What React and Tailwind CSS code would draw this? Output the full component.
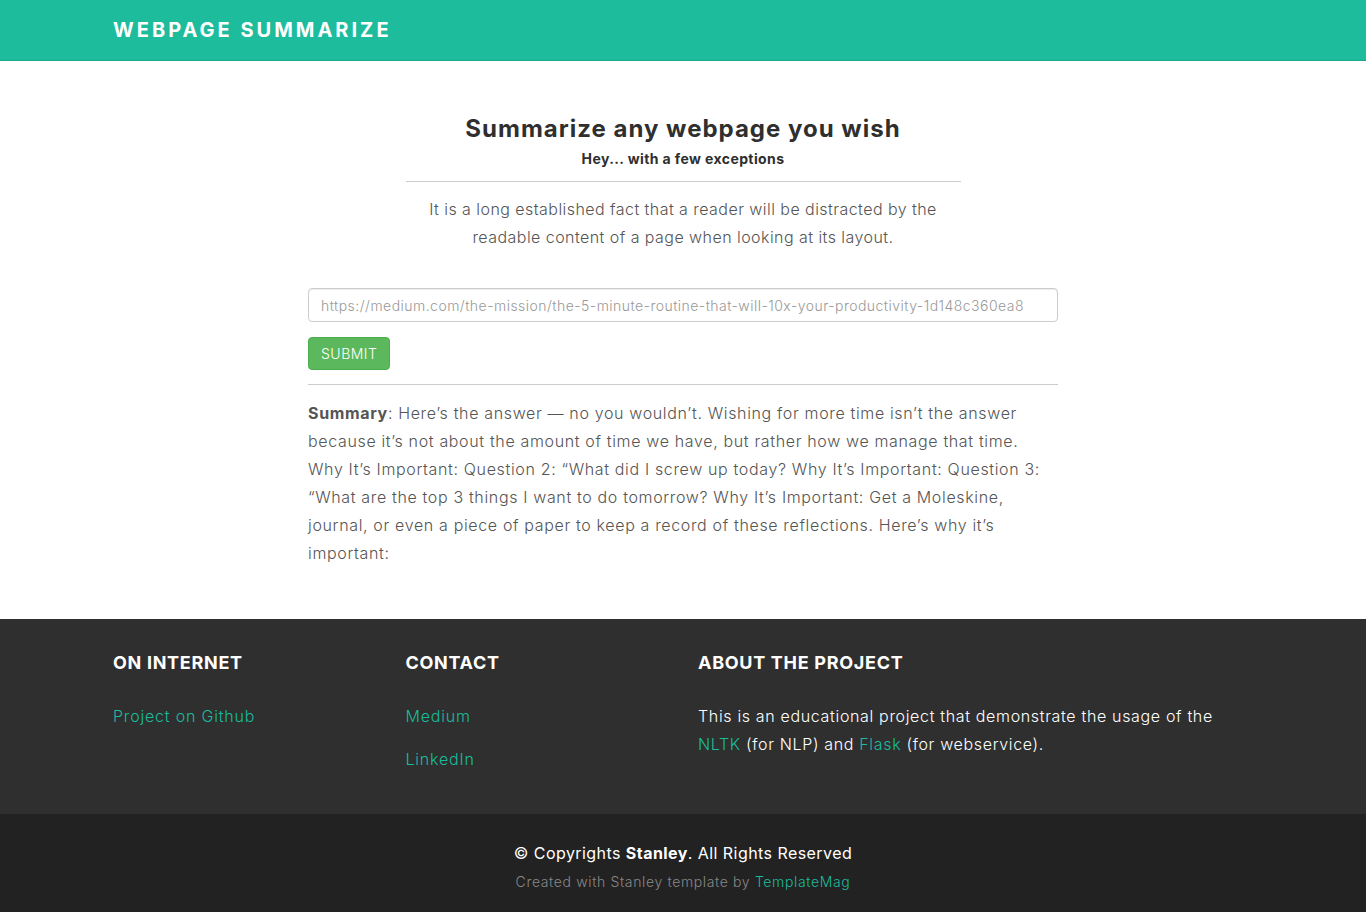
import React from "react";

const font = { fontFamily: "Inter, 'Noto Sans', sans-serif" };

const FooterCol = ({ title, className, children }) => (
  <div className={className}>
    <h4 className="text-[18px] font-bold uppercase text-white leading-[26px] tracking-[0.7px] mb-[26px]">
      {title}
    </h4>
    {children}
  </div>
);

export default function App() {
  return (
    <div className="min-h-screen bg-white text-[#555]" style={font}>
      {/* navbar */}
      <nav className="h-[61px] bg-[#1dbc9c] border-b border-[#19a98c]">
        <div className="w-[1170px] mx-auto px-[15px] h-full flex items-center">
          <a className="text-white font-bold text-[20px] tracking-[3px] uppercase">
            Webpage Summarize
          </a>
        </div>
      </nav>

      {/* main */}
      <main className="w-[1170px] mx-auto px-[15px] pt-[51px] pb-[52px]">
        <div className="flex flex-col items-center">
          <h3 className="text-[24px] font-bold text-[#2f2f2f] leading-[34px] tracking-[1px]">
            Summarize any webpage you wish
          </h3>
          <h5 className="text-[14px] font-bold text-[#2f2f2f] leading-[20px] tracking-[0.4px] mt-[3px]">
            Hey... with a few exceptions
          </h5>
          <hr className="w-[555px] border-t border-[#ccc] mt-[12px] mb-[13px]" />
          <p className="w-[555px] text-center text-[16px] font-light leading-[28px] tracking-[0.45px]">
            It is a long established fact that a reader will be distracted by the
            readable content of a page when looking at its layout.
          </p>
        </div>

        <div className="w-[750px] mx-auto mt-[37px]">
          <input
            type="text"
            placeholder="https://medium.com/the-mission/the-5-minute-routine-that-will-10x-your-productivity-1d148c360ea8"
            className="w-full h-[34px] border border-[#ccc] rounded-[4px] px-[12px] text-[14px] font-light tracking-[0.47px] text-[#555] placeholder:text-[#999] outline-none shadow-[inset_0_1px_1px_rgba(0,0,0,0.075)]"
          />
          <button className="mt-[15px] h-[33px] px-[12px] bg-[#5cb85c] border border-[#4cae4c] rounded-[4px] text-white text-[14px] font-light tracking-[0.5px]">
            SUBMIT
          </button>
          <hr className="border-t border-[#ccc] mt-[14px] mb-[14px]" />
          <p className="text-[16px] font-light leading-[28px] tracking-[0.65px]">
            <strong className="font-bold">Summary</strong>: Here’s the answer — no you
            wouldn’t. Wishing for more time isn’t the answer because it’s not about the
            amount of time we have, but rather how we manage that time. Why It’s
            Important: Question 2: “What did I screw up today? Why It’s Important:
            Question 3: “What are the top 3 things I want to do tomorrow? Why It’s
            Important: Get a Moleskine, journal, or even a piece of paper to keep a
            record of these reflections. Here’s why it’s important:
          </p>
        </div>
      </main>

      {/* footer */}
      <footer className="bg-[#2f2f2f] pt-[31px] pb-[41px]">
        <div className="w-[1170px] mx-auto px-[15px] flex">
          <FooterCol title="On Internet" className="w-[292.5px] shrink-0">
            <a className="block text-[#1abc9c] text-[16px] font-light leading-[28px] tracking-[0.8px]">
              Project on Github
            </a>
          </FooterCol>
          <FooterCol title="Contact" className="w-[292.5px] shrink-0">
            <a className="block text-[#1abc9c] text-[16px] font-light leading-[28px] tracking-[0.8px]">
              Medium
            </a>
            <a className="block text-[#1abc9c] text-[16px] font-light leading-[28px] tracking-[0.8px] mt-[15px]">
              LinkedIn
            </a>
          </FooterCol>
          <FooterCol title="About The Project" className="flex-1 pr-[15px]">
            <p className="text-white text-[16px] font-light leading-[28px] tracking-[0.66px]">
              This is an educational project that demonstrate the usage of the{" "}
              <a className="text-[#1abc9c]">NLTK</a> (for NLP) and{" "}
              <a className="text-[#1abc9c]">Flask</a> (for webservice).
            </p>
          </FooterCol>
        </div>
      </footer>

      <div className="bg-[#222] pt-[26px] pb-[20px] text-center">
        <p className="text-white text-[16px] leading-[26px] tracking-[0.44px]">
          © Copyrights <strong className="font-bold">Stanley</strong>. All Rights Reserved
        </p>
        <p className="text-[#888] text-[14px] font-light leading-[26px] tracking-[0.64px] mt-[3px]">
          Created with Stanley template by <a className="text-[#1abc9c]">TemplateMag</a>
        </p>
      </div>
    </div>
  );
}
